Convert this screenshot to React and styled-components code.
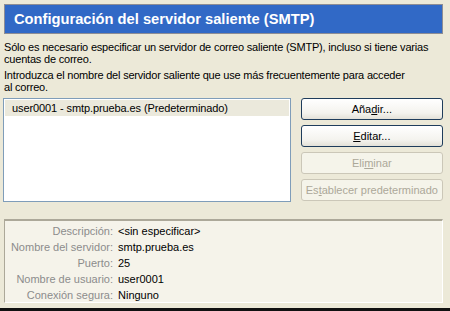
import { Fragment } from "react";
import styled, { createGlobalStyle } from "styled-components";

const GlobalStyle = createGlobalStyle`
    html, body {
        margin: 0;
        padding: 0;
        background: #ece9d8;
    }
`;

const Page = styled.div`
    width: 450px;
    height: 311px;
    box-sizing: border-box;
    background: #ece9d8;
    font-family: "Liberation Sans", Arial, sans-serif;
    font-size: 11px;
    color: #000;
    display: flex;
    flex-direction: column;
    padding: 4px 7px 0 3px;
    overflow: hidden;
    position: relative;
`;

const Header = styled.div`
    height: 30px;
    box-sizing: border-box;
    margin-left: 1px;
    background: #3169c6;
    border: 1px solid #8d8d94;
    display: flex;
    align-items: center;
    padding-left: 9px;
`;

const HeaderTitle = styled.span`
    color: #fff;
    font-weight: bold;
    font-size: 14.7px;
`;

const Intro = styled.div`
    margin-top: 7px;
    padding-left: 1px;
    display: flex;
    flex-direction: column;
    gap: 4px;
    white-space: nowrap;
    letter-spacing: -0.2px;
`;

const Para = styled.p`
    margin: 0;
    line-height: 12px;
`;

const Middle = styled.div`
    margin-top: 5px;
    display: flex;
    gap: 10px;
`;

const List = styled.div`
    width: 289px;
    height: 104px;
    box-sizing: border-box;
    border: 1px solid #7f9db9;
    background: #fff;
    padding: 1px;
`;

const ListRow = styled.div`
    height: 16px;
    line-height: 16px;
    padding-left: 7px;
    letter-spacing: -0.1px;
    background: ${(p) => (p.selected ? "#ebe9dc" : "transparent")};
`;

const Buttons = styled.div`
    width: 143px;
    display: flex;
    flex-direction: column;
    gap: 5px;
`;

const Button = styled.button`
    height: 22px;
    box-sizing: border-box;
    border-radius: 3px;
    font-family: "Liberation Sans", Arial, sans-serif;
    font-size: 11px;
    padding: 0;
    white-space: nowrap;
    border: 1px solid ${(p) => (p.disabled ? "#cbc7b8" : "#1f3d5c")};
    background: ${(p) =>
        p.disabled
            ? "#f5f4ea"
            : "linear-gradient(#ffffff, #f4f3ee 70%, #e3e1d8)"};
    color: ${(p) => (p.disabled ? "#aca899" : "#000")};
`;

const Panel = styled.div`
    margin-top: 17px;
    margin-left: 1px;
    height: 84px;
    box-sizing: border-box;
    background: #f5f3ea;
    border-top: 2px solid #aca899;
    border-left: 1px solid #aca899;
    border-right: 1px solid #fff;
    border-bottom: 1px solid #fff;
    padding-top: 2px;
    display: grid;
    grid-template-columns: 108px 1fr;
    column-gap: 5px;
    grid-auto-rows: 16px;
    align-items: center;
`;

const Label = styled.span`
    color: #8c8c8c;
    text-align: right;
    white-space: nowrap;
`;

const Value = styled.span`
    color: #000;
`;

const BottomEdge = styled.div`
    position: absolute;
    left: 0;
    right: 0;
    bottom: 0;
    height: 3px;
    background: #111;
`;

const details = [
    ["Descripción:", "<sin especificar>"],
    ["Nombre del servidor:", "smtp.prueba.es"],
    ["Puerto:", "25"],
    ["Nombre de usuario:", "user0001"],
    ["Conexión segura:", "Ninguno"],
];

const App = () => {
    return (
        <Page>
            <GlobalStyle />
            <Header>
                <HeaderTitle>Configuración del servidor saliente (SMTP)</HeaderTitle>
            </Header>
            <Intro>
                <Para>
                    Sólo es necesario especificar un servidor de correo saliente (SMTP), incluso si tiene varias
                    <br />
                    cuentas de correo.
                </Para>
                <Para>
                    Introduzca el nombre del servidor saliente que use más frecuentemente para acceder
                    <br />
                    al correo.
                </Para>
            </Intro>
            <Middle>
                <List>
                    <ListRow selected>user0001 - smtp.prueba.es (Predeterminado)</ListRow>
                </List>
                <Buttons>
                    <Button>Aña<u>d</u>ir...</Button>
                    <Button><u>E</u>ditar...</Button>
                    <Button disabled>Eli<u>m</u>inar</Button>
                    <Button disabled>Es<u>t</u>ablecer predeterminado</Button>
                </Buttons>
            </Middle>
            <Panel>
                {details.map(([label, value]) => (
                    <Fragment key={label}>
                        <Label>{label}</Label>
                        <Value>{value}</Value>
                    </Fragment>
                ))}
            </Panel>
            <BottomEdge />
        </Page>
    );
};

export default App;
